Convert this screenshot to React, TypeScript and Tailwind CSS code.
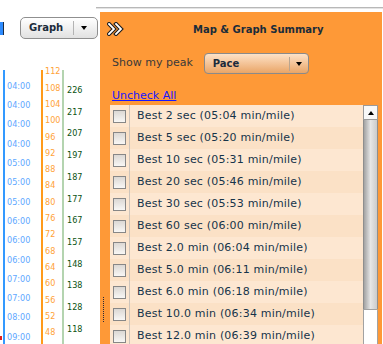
import React from 'react';

const paceTicks = ['04:00', '04:00', '04:00', '04:00', '05:00', '05:00', '05:00', '06:00', '06:00', '06:00', '07:00', '07:00', '08:00', '09:00'];
const hrTicks = [112, 108, 104, 100, 96, 92, 88, 84, 80, 76, 72, 68, 64, 60, 56, 52, 48];
const elevTicks = [226, 217, 207, 197, 187, 177, 167, 157, 148, 138, 128, 118];

const peaks = [
  'Best 2 sec (05:04 min/mile)',
  'Best 5 sec (05:20 min/mile)',
  'Best 10 sec (05:31 min/mile)',
  'Best 20 sec (05:46 min/mile)',
  'Best 30 sec (05:53 min/mile)',
  'Best 60 sec (06:00 min/mile)',
  'Best 2.0 min (06:04 min/mile)',
  'Best 5.0 min (06:11 min/mile)',
  'Best 6.0 min (06:18 min/mile)',
  'Best 10.0 min (06:34 min/mile)',
  'Best 12.0 min (06:39 min/mile)',
];

const DownArrow = () => (
  <span className="block w-0 h-0 border-x-[3px] border-x-transparent border-t-[4px] border-t-black" />
);

const App: React.FC = () => {
  return (
    <div className="relative flex w-[383px] h-[344px] overflow-hidden bg-white font-['DejaVu_Sans',sans-serif]">
      {/* chart side */}
      <div className="w-[100px] shrink-0 flex flex-col">
        <div className="flex items-start h-[70px] pt-[17px] shrink-0">
          <div className="w-[4px] h-[13px] mt-[5px] bg-[#2e8cff] border-r border-[#1b2c44]" />
          <div className="ml-[16px] w-[78px] h-[22px] rounded-[5px] border border-[#8f8f8f] bg-gradient-to-b from-white to-[#e1e1e1] flex items-center">
            <span className="w-[52px] pl-[8px] text-[10px] font-bold text-[#1b2b3b] leading-none">Graph</span>
            <span className="h-[14px] w-px bg-[#b3b3b3]" />
            <span className="ml-[7px]">
              <DownArrow />
            </span>
          </div>
        </div>

        <div className="flex flex-1 font-['DejaVu_Sans_Condensed','DejaVu_Sans',sans-serif] text-[9px]">
          {/* pace axis */}
          <div className="ml-[3px] w-[38px] border-l-2 border-[#3399ff] pl-[2px] pt-[7px] flex flex-col text-[#5ea8ff]">
            {paceTicks.map((t, i) => (
              <div key={i} className="h-[19.3px] flex items-center shrink-0">{t}</div>
            ))}
          </div>
          {/* heart rate axis */}
          <div className="w-[21px] border-l-2 border-[#ff9a1a] pl-[2px] flex flex-col text-[#ffa237]">
            <div className="-mt-[6px] flex flex-col">
              {hrTicks.map((t, i) => (
                <div key={i} className="h-[16.31px] flex items-center shrink-0">{t}</div>
              ))}
            </div>
          </div>
          {/* elevation axis */}
          <div className="flex-1 border-l-2 border-[#b4d4b0] pl-[3px] pt-[10px] flex flex-col text-[#0b5212]">
            {elevTicks.map((t, i) => (
              <div key={i} className="h-[21.7px] flex items-center shrink-0">{t}</div>
            ))}
          </div>
        </div>
      </div>

      {/* summary side */}
      <div className="w-[283px] shrink-0 flex flex-col">
        <div className="-ml-[4px] mt-[7px] h-px bg-[#b8b8b8]" />
        <div className="-ml-[4px] h-px bg-[#e3e3e3]" />
        <div className="mt-[3px] flex flex-1 min-h-0">
          <div className="relative w-[282px] bg-[#fe9937] flex flex-col">
            <div className="flex items-center h-[34px] pl-[7px] shrink-0">
              <svg width="17" height="14" viewBox="0 0 17 14">
                <g fill="none" strokeLinecap="square" strokeLinejoin="miter">
                  <polyline points="2,2 7,7 2,12" stroke="#1e1e1e" strokeWidth="4" />
                  <polyline points="9,2 14,7 9,12" stroke="#1e1e1e" strokeWidth="4" />
                  <polyline points="2,2 7,7 2,12" stroke="#ffffff" strokeWidth="1.8" />
                  <polyline points="9,2 14,7 9,12" stroke="#ffffff" strokeWidth="1.8" />
                </g>
              </svg>
              <span className="ml-[69px] text-[10px] font-bold text-[#1a2c3a]">Map &amp; Graph Summary</span>
            </div>

            <div className="flex items-center mt-[7px] h-[21px] pl-[12px] shrink-0">
              <span className="text-[11px] text-[#3a3a3a]">Show my peak</span>
              <div className="ml-[11px] w-[105px] h-[21px] rounded-[4px] border border-[#8a8a8a] bg-gradient-to-b from-[#fde2c7] to-[#e9a566] flex items-center">
                <span className="w-[84px] pl-[8px] text-[10px] font-bold text-[#1b2b3b] leading-none">Pace</span>
                <span className="h-[14px] w-px bg-[#b9a590]" />
                <span className="ml-[6px]">
                  <DownArrow />
                </span>
              </div>
            </div>

            <div className="mt-[8px] h-[13px] pl-[12px] shrink-0">
              <span className="text-[11px] leading-[13px] text-[#1616ff] underline">Uncheck All</span>
            </div>

            <div className="mt-[10px] ml-[10px] mr-[4px] flex flex-1 min-h-0 overflow-hidden">
              <div className="flex-1 flex flex-col">
                {peaks.map((p, i) => (
                  <div key={p} className={`flex h-[22px] shrink-0 ${i % 2 === 0 ? 'bg-[#fde7d1]' : 'bg-[#fbe1c6]'}`}>
                    <div className="w-[20px] border-r border-[#cdc4bb] flex items-center pl-[3px] shrink-0">
                      <span className="w-[13px] h-[13px] border border-[#878787] bg-gradient-to-b from-[#dcd8d4] to-[#f8f7f5]" />
                    </div>
                    <div className="pl-[7px] flex items-center text-[11px] tracking-[0.2px] text-[#16344a] whitespace-nowrap">{p}</div>
                  </div>
                ))}
              </div>
              <div className="w-[15px] shrink-0 flex flex-col">
                <div className="h-[15px] bg-[#f8f8f8] border border-[#9a9a9a] flex items-center justify-center shrink-0">
                  <span className="block w-0 h-0 border-x-[3px] border-x-transparent border-b-[4px] border-b-black" />
                </div>
                <div className="h-[189px] shrink-0 border-x border-[#8e8e8e] bg-gradient-to-r from-[#a3a3a3] via-[#e6e6e6] to-[#cbcbcb]" />
                <div className="flex-1 bg-white border-l border-t border-r border-[#a2a2a2] rounded-tr-[2px]" />
              </div>
            </div>

            <div className="absolute left-[3px] top-[285px] h-[25px] border-l border-dotted border-[#2a2a3a]" />
          </div>
        </div>
      </div>

      <div className="absolute left-0 top-[336px] w-[2px] h-[4px] bg-[#e02020]" />
    </div>
  );
};

export default App;
